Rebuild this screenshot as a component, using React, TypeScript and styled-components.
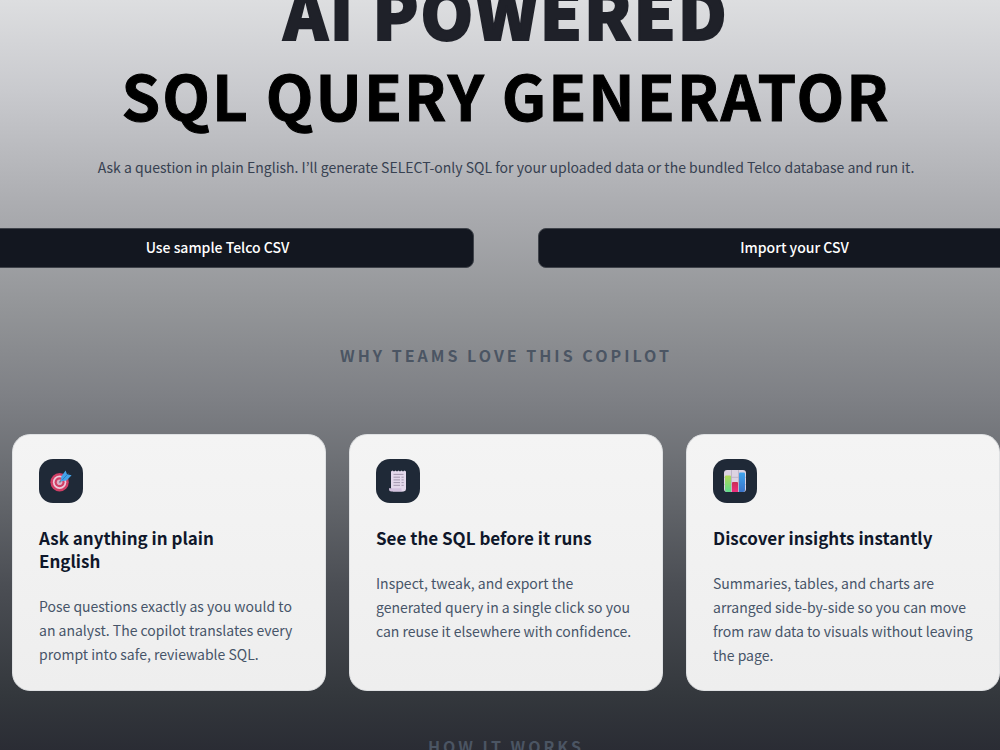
import React from "react";
import styled, { createGlobalStyle } from "styled-components";

const GlobalStyle = createGlobalStyle`
  *, *::before, *::after { box-sizing: border-box; }
  body { margin: 0; background: #2b2d35; }
`;

const Page = styled.main`
  height: 100vh;
  overflow: hidden;
  padding-left: 12px;
  display: flex;
  flex-direction: column;
  font-family: "Source Sans Pro", "Noto Sans CJK KR", sans-serif;
  background: linear-gradient(
    180deg,
    #dddee0 0%,
    #c9cace 12%,
    #acadb1 27%,
    #939598 41%,
    #7e8085 53%,
    #66696e 65%,
    #4b4e54 78%,
    #33373c 93%,
    #2a2c34 100%
  );
`;

const Hero = styled.header`
  flex: none;
  margin-top: -26px;
  text-align: center;
`;

const Title = styled.h1`
  margin: 0;
  font-size: 62px;
  line-height: 80px;
  font-weight: 700;
  letter-spacing: 2px;
  color: #000;
  -webkit-text-stroke: 1px currentColor;
`;

const TitleLead = styled.span`
  display: block;
  padding-bottom: 6px;
  font-size: 67px;
  line-height: 74px;
  font-weight: 900;
  color: #1f2129;
  -webkit-text-stroke: 2px currentColor;
`;

const Subtitle = styled.p`
  margin: 21px 0 0;
  font-size: 14px;
  line-height: 24px;
  color: #374151;
`;

const Actions = styled.div`
  flex: none;
  display: grid;
  grid-template-columns: 1fr 1fr;
  gap: 64px;
  margin: 49px -51px 0;
`;

const ActionButton = styled.button`
  height: 40px;
  padding: 0 12px 2px;
  border: 1px solid #3f434a;
  border-radius: 8px;
  background: #131720;
  color: #fff;
  font: inherit;
  font-size: 14px;
  line-height: 24px;
  font-weight: 500;
  cursor: pointer;
`;

const SectionLabel = styled.h2<{ $gap: number }>`
  flex: none;
  margin: ${(p) => p.$gap}px 0 0;
  text-align: center;
  font-size: 16px;
  line-height: 24px;
  font-weight: 700;
  letter-spacing: 3px;
  text-transform: uppercase;
  color: #4b5563;
`;

const Cards = styled.section`
  flex: none;
  display: grid;
  grid-template-columns: repeat(3, minmax(0, 1fr));
  gap: 23px;
  margin-top: 67px;
`;

const Card = styled.article`
  min-height: 257px;
  padding: 24px 25px 22px 26px;
  border: 1px solid #dfe1e3;
  border-radius: 18px;
  background: linear-gradient(180deg, #f4f4f4, #eeeeee);
`;

const IconTile = styled.div`
  display: grid;
  place-items: center;
  width: 44px;
  height: 44px;
  border-radius: 14px;
  background: #1f2937;
`;

const CardTitle = styled.h3`
  margin: 23px 32px 0 0;
  font-size: 17px;
  line-height: 23px;
  font-weight: 700;
  color: #0f172a;
`;

const CardText = styled.p`
  margin: 22px 0 0;
  font-size: 14px;
  line-height: 24px;
  color: #475569;
`;

const TargetIcon = () => (
  <svg width="22" height="22" viewBox="0 0 22 22" aria-hidden="true">
    <circle cx="9.6" cy="12.2" r="9.2" fill="#d13f66" />
    <circle cx="9.6" cy="12.2" r="6.7" fill="#eccbdc" />
    <circle cx="9.6" cy="12.2" r="5" fill="#d13f66" />
    <circle cx="9.6" cy="12.2" r="2.8" fill="#dcb2c8" />
    <path d="M9.4 12.6 15 6.6" stroke="#6b7c95" strokeWidth="1.5" />
    <path d="M11 11.2 11.3 6.4 15.6 .6 17 4.2 21.6 5.2 16.6 10.6z" fill="#45a3ea" />
    <path d="M12.4 9.8 18.2 3.6" stroke="#2a7cc4" strokeWidth="1" />
  </svg>
);

const ReceiptIcon = () => (
  <svg width="22" height="22" viewBox="0 0 22 22" aria-hidden="true">
    <path
      d="M4 1.5 5.5.6 7 1.5 8.5.6 10 1.5 11.5.6 13 1.5 14.5.6 16 1.5 17.5.6 19 1.5V19a2.4 2.4 0 0 1-2.4 2.4H6L4 18z"
      fill="#e4d9ec"
    />
    <path d="M2 18.2h12.4v1.2a2 2 0 0 0 2 2H4.2A2.2 2.2 0 0 1 2 19.2z" fill="#d3c2df" />
    <path
      d="M6.5 4.4h10M6.5 7.2h6.5M6.5 9.9h6.5M6.5 12.6h6.5M6.5 15.3h6.5M14.5 7.2h2.2M14.5 9.9h2.2M14.5 12.6h2.2M14.5 15.3h2.2"
      stroke="#9b8fa6"
      strokeWidth=".9"
    />
  </svg>
);

const ChartIcon = () => (
  <svg width="22" height="22" viewBox="0 0 22 22" aria-hidden="true">
    <defs>
      <linearGradient id="barGreen" x1="0" y1="0" x2="0" y2="1">
        <stop offset="0" stopColor="#b2d957" />
        <stop offset="1" stopColor="#5fdc8c" />
      </linearGradient>
      <linearGradient id="barRed" x1="0" y1="0" x2="0" y2="1">
        <stop offset="0" stopColor="#c92f55" />
        <stop offset="1" stopColor="#ee2f7e" />
      </linearGradient>
      <linearGradient id="barBlue" x1="0" y1="0" x2="0" y2="1">
        <stop offset="0" stopColor="#3fa5ee" />
        <stop offset="1" stopColor="#3a73c8" />
      </linearGradient>
    </defs>
    <rect width="22" height="22" rx="3" fill="#ddd3e2" />
    <path d="M7.5 0v22M14.5 0v22M0 7.3h22M0 14.6h22" stroke="#b9adc2" strokeWidth=".8" />
    <path d="M1 6.4a1 1 0 0 1 1-1h4a1 1 0 0 1 1 1V22H3a2 2 0 0 1-2-2z" fill="url(#barGreen)" />
    <path d="M8 13a1 1 0 0 1 1-1h4a1 1 0 0 1 1 1v9H8z" fill="url(#barRed)" />
    <path d="M15 3.4a1 1 0 0 1 1-1h4a1 1 0 0 1 1 1V20a2 2 0 0 1-2 2h-4z" fill="url(#barBlue)" />
  </svg>
);

const features = [
  {
    icon: <TargetIcon />,
    title: "Ask anything in plain English",
    text: "Pose questions exactly as you would to an analyst. The copilot translates every prompt into safe, reviewable SQL.",
  },
  {
    icon: <ReceiptIcon />,
    title: "See the SQL before it runs",
    text: "Inspect, tweak, and export the generated query in a single click so you can reuse it elsewhere with confidence.",
  },
  {
    icon: <ChartIcon />,
    title: "Discover insights instantly",
    text: "Summaries, tables, and charts are arranged side-by-side so you can move from raw data to visuals without leaving the page.",
  },
];

export default function App() {
  return (
    <>
      <GlobalStyle />
      <Page>
        <Hero>
          <Title>
            <TitleLead>AI POWERED</TitleLead>
            SQL QUERY GENERATOR
          </Title>
          <Subtitle>
            Ask a question in plain English. I’ll generate SELECT-only SQL for your uploaded data
            or the bundled Telco database and run it.
          </Subtitle>
        </Hero>
        <Actions>
          <ActionButton type="button">Use sample Telco CSV</ActionButton>
          <ActionButton type="button">Import your CSV</ActionButton>
        </Actions>
        <SectionLabel $gap={75}>Why teams love this copilot</SectionLabel>
        <Cards>
          {features.map((f) => (
            <Card key={f.title}>
              <IconTile>{f.icon}</IconTile>
              <CardTitle>{f.title}</CardTitle>
              <CardText>{f.text}</CardText>
            </Card>
          ))}
        </Cards>
        <SectionLabel $gap={43}>How it works</SectionLabel>
      </Page>
    </>
  );
}
